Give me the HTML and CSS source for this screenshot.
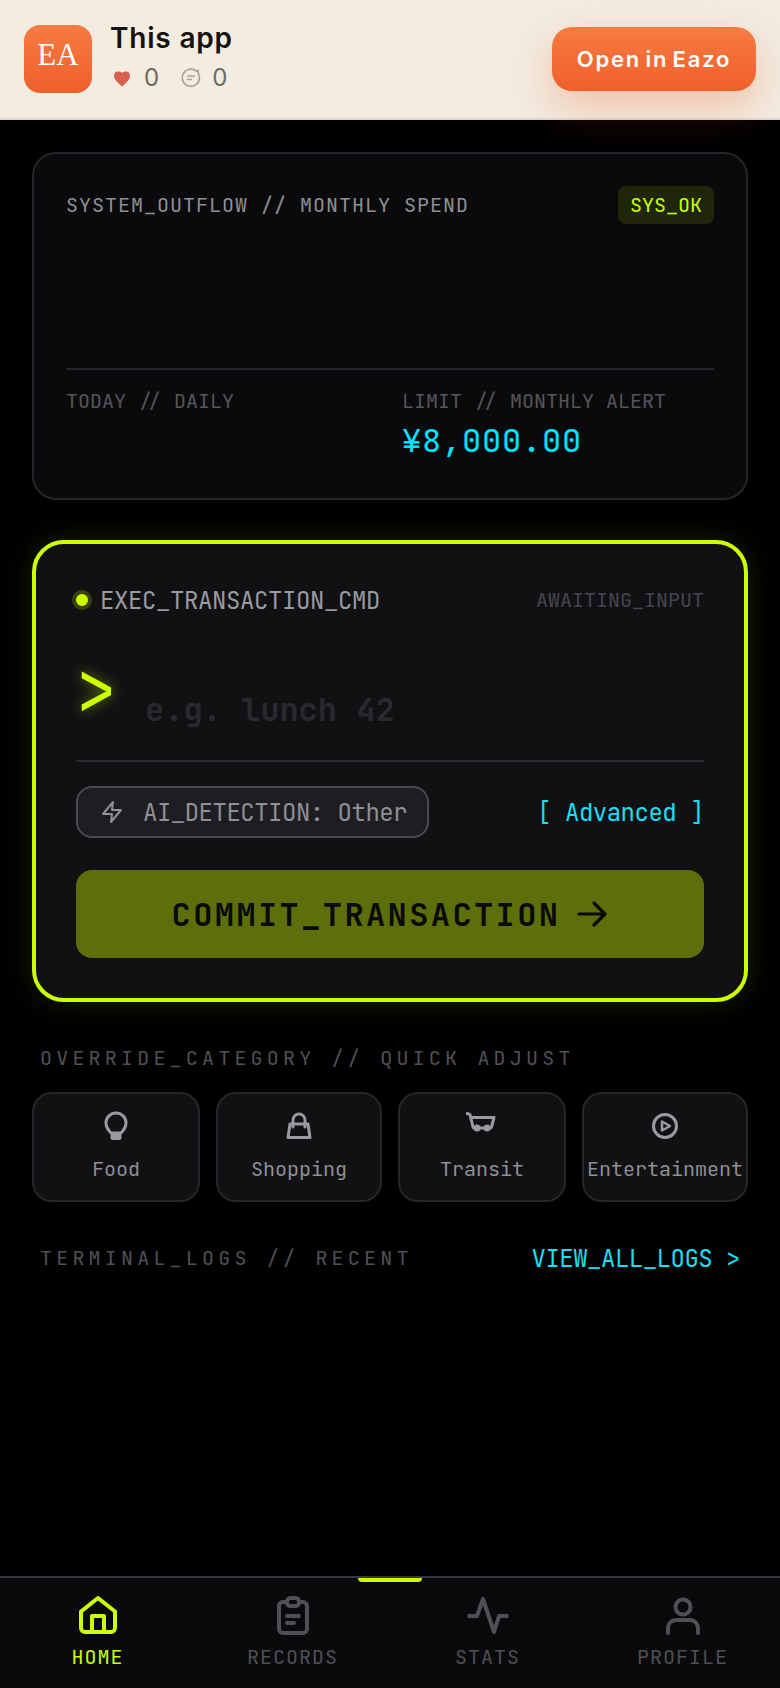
FILE: index.html
```html
<!DOCTYPE html>
<html lang="en">
<head>
<meta charset="utf-8">
<title>This app</title>
<link rel="stylesheet" href="styles.css">
</head>
<body>
<div class="page">
  <header class="topbar">
    <div class="app-icon">EA</div>
    <div class="app-info">
      <div class="app-name">This app</div>
      <div class="app-meta">
        <svg class="meta-icon" viewBox="0 0 20 20"><path class="heart" d="M10 18.500 C5.500 14.500 2 11.500 2 7.500 C2 5 4 3.500 6 3.500 C7.800 3.500 9.200 4 10 5 C10.800 4 12.200 3.500 14 3.500 C16 3.500 18 5 18 7.500 C18 11.500 14.500 14.500 10 18.500 Z"/></svg>
        <span class="meta-num">0</span>
        <svg class="meta-icon chat" viewBox="0 0 20 20"><path class="chat-line" d="M17 2.500 L15.500 3.200 A8.600 8.600 0 1 0 18.500 10 A8.600 8.600 0 0 0 17.300 5.500 Z M6 8 H14 M6 11.500 H11"/></svg>
        <span class="meta-num">0</span>
      </div>
    </div>
    <div class="open-btn">Open in Eazo</div>
  </header>

  <main class="main">
    <section class="card spend">
      <div class="spend-head">
        <span class="eyebrow">SYSTEM_OUTFLOW // MONTHLY SPEND</span>
        <span class="badge">SYS_OK</span>
      </div>
      <div class="spend-amount"></div>
      <div class="spend-stats">
        <div class="stat"><div class="stat-label">TODAY // DAILY</div></div>
        <div class="stat">
          <div class="stat-label">LIMIT // MONTHLY ALERT</div>
          <div class="stat-value">¥8,000.00</div>
        </div>
      </div>
    </section>

    <section class="cmd">
      <div class="cmd-head">
        <span class="cmd-title"><i class="dot"></i>EXEC_TRANSACTION_CMD</span>
        <span class="cmd-status">AWAITING_INPUT</span>
      </div>
      <div class="cmd-input">
        <span class="prompt">&gt;</span>
        <span class="placeholder">e.g. lunch 42</span>
      </div>
      <div class="cmd-tools">
        <span class="pill">
          <svg class="pill-icon" viewBox="0 0 24 24"><path d="M13 2 L3 14 H12 L11 22 L21 10 H12 Z"/></svg>
          AI_DETECTION: Other
        </span>
        <span class="advanced">[ Advanced ]</span>
      </div>
      <div class="commit">
        <span>COMMIT_TRANSACTION</span>
        <svg class="commit-icon" viewBox="0 0 32 32"><path d="M3 16 H29 M18 5 L29 16 L18 27"/></svg>
      </div>
    </section>

    <div class="section-label override">OVERRIDE_CATEGORY // QUICK ADJUST</div>
    <div class="tiles">
      <div class="tile">
        <svg class="tile-icon" viewBox="0 0 32 32"><path d="M11 23 C8 20 6 17.500 6 13 A10 10 0 0 1 26 13 C26 17.500 24 20 21 23 Z"/><rect class="fill" x="10.500" y="23" width="11" height="7" rx="2"/></svg>
        <span class="tile-label">Food</span>
      </div>
      <div class="tile">
        <svg class="tile-icon" viewBox="0 0 32 32"><path d="M7 14 H25 L27 27.500 H5 Z"/><path d="M10 17 V10 A6 6 0 0 1 22 10 V17"/></svg>
        <span class="tile-label">Shopping</span>
      </div>
      <div class="tile">
        <svg class="tile-icon" viewBox="0 0 32 32"><path d="M1 3.500 L4 4.500 L7 17 C7.500 18.500 8 18.500 10 18 H22 C24 18.500 25 18.500 25.500 17 L28 7.500 H5"/><circle class="fill" cx="11" cy="18" r="3.500"/><circle class="fill" cx="21" cy="18" r="3.500"/></svg>
        <span class="tile-label">Transit</span>
      </div>
      <div class="tile">
        <svg class="tile-icon" viewBox="0 0 32 32"><circle cx="16" cy="16" r="11.500"/><path class="thin" d="M13 11.500 L21 16 L13 20.500 Z"/></svg>
        <span class="tile-label">Entertainment</span>
      </div>
    </div>

    <div class="logs-head">
      <span class="section-label">TERMINAL_LOGS // RECENT</span>
      <span class="view-all">VIEW_ALL_LOGS &gt;</span>
    </div>
  </main>

  <nav class="tabbar">
    <i class="indicator"></i>
    <div class="tab active">
      <svg class="tab-icon" viewBox="0 0 48 48"><path d="M24 6 L41 19.500 V36 A4 4 0 0 1 37 40 H11 A4 4 0 0 1 7 36 V19.500 Z"/><path d="M18 40 V24 H30 V40"/></svg>
      <span>HOME</span>
    </div>
    <div class="tab">
      <svg class="tab-icon" viewBox="0 0 48 48"><path d="M18 10 H14 A4 4 0 0 0 10 14 V37 A4 4 0 0 0 14 41 H34 A4 4 0 0 0 38 37 V14 A4 4 0 0 0 34 10 H30"/><rect x="18" y="6" width="12" height="8" rx="3.500"/><path d="M18 24 H30 M18 31 H25"/></svg>
      <span>RECORDS</span>
    </div>
    <div class="tab">
      <svg class="tab-icon" viewBox="0 0 48 48"><path d="M5 24 H13 L19 7 L30 40 L35 24 H43"/></svg>
      <span>STATS</span>
    </div>
    <div class="tab">
      <svg class="tab-icon" viewBox="0 0 48 48"><circle cx="24" cy="15" r="7.500"/><path d="M9 41 V36 A8 8 0 0 1 17 28 H31 A8 8 0 0 1 39 36 V41"/></svg>
      <span>PROFILE</span>
    </div>
  </nav>
</div>
</body>
</html>
```
FILE: styles.css
```css
* { box-sizing: border-box; }
html, body { margin: 0; padding: 0; background: #000; }
body { font-family: "JetBrains Mono", "Noto Sans Mono", "DejaVu Sans Mono", "Liberation Mono", monospace; }
.page { width: 780px; height: 1688px; display: flex; flex-direction: column; overflow: hidden; }

.topbar { height: 120px; flex: none; display: flex; align-items: center; padding: 0 24px; background: #f2ece1; border-bottom: 2px solid #dcd8cf; font-family: Inter, sans-serif; position: relative; z-index: 2; }
.app-icon { width: 68px; height: 68px; border-radius: 16px; background: linear-gradient(180deg, #f67c42, #f05f2a); color: #fff; font-family: "Liberation Serif", serif; font-size: 31px; line-height: 60px; text-align: center; }
.app-info { margin-left: 19px; flex: 1; }
.app-name { font-size: 28px; font-weight: 600; line-height: 34px; color: #14130f; letter-spacing: 0.8px; margin-top: -5px; margin-left: -1px; }
.app-meta { display: flex; align-items: center; height: 30px; margin-top: 8px; margin-left: 1px; }
.meta-icon { width: 20px; height: 20px; margin-right: 12px; }
.meta-icon.chat { margin-left: 22px; margin-right: 11px; }
.heart { fill: #d8614c; }
.chat-line { fill: none; stroke: #a8a296; stroke-width: 1.6; }
.meta-num { font-size: 24px; color: #6f6a60; line-height: 30px; }
.open-btn { width: 204px; height: 64px; margin-top: -1px; border-radius: 20px; background: linear-gradient(180deg, #f67c42, #f05f2a); color: #fff; font-size: 22px; font-weight: 600; letter-spacing: 1.8px; word-spacing: -3px; line-height: 64px; text-align: center; box-shadow: 0 16px 40px rgba(240, 96, 40, 0.3); }

.main { flex: 1; padding: 32px 32px 0; }

.card { border: 2px solid #26262a; border-radius: 24px; background: #0a0a0d; padding: 32px; height: 348px; }
.spend-head { display: flex; justify-content: space-between; align-items: center; height: 38px; }
.eyebrow { font-size: 20px; letter-spacing: 1px; color: #909096; }
.badge { height: 38px; line-height: 38px; padding: 0 12px; border-radius: 8px; background: #20260a; color: #ccff00; font-size: 20px; }
.spend-amount { height: 144px; }
.spend-stats { display: grid; grid-template-columns: 336px 1fr; border-top: 2px solid #26262a; padding-top: 21px; }
.stat-label { font-size: 20px; line-height: 20px; color: #55555a; }
.stat-value { font-size: 32px; line-height: 48px; margin-top: 6px; letter-spacing: 0.8px; color: #00e5ff; }

.cmd { margin-top: 40px; height: 462px; border: 4px solid #ccff00; border-radius: 32px; background: #111114; padding: 40px; box-shadow: 0 0 30px rgba(204, 255, 0, 0.12); }
.cmd-head { display: flex; justify-content: space-between; align-items: center; height: 32px; }
.cmd-title { display: flex; align-items: center; font-size: 24px; letter-spacing: -0.4px; color: #9a9aa0; }
.dot { width: 12px; height: 12px; border-radius: 50%; background: #ccff00; box-shadow: 0 0 0 4px rgba(204, 255, 0, 0.2); margin-right: 12px; }
.cmd-status { font-size: 20px; color: #45454b; }
.cmd-input { display: flex; align-items: flex-start; margin-top: 44px; height: 102px; border-bottom: 2px solid #2a2a2e; }
.prompt { font-size: 68px; font-weight: 400; line-height: 60px; width: 36px; color: #ccff00; text-shadow: 0 0 12px rgba(204, 255, 0, 0.5); transform: scaleY(1.1); }
.placeholder { margin: 26px 0 0 33px; font-size: 32px; font-weight: 700; line-height: 48px; color: #2a2a2e; }
.cmd-tools { display: flex; justify-content: space-between; align-items: center; margin-top: 24px; height: 52px; }
.pill { display: flex; align-items: center; height: 52px; width: 353px; padding-left: 22px; border: 2px solid #4a4a50; border-radius: 16px; background: #1e1e22; font-size: 24px; letter-spacing: -0.5px; color: #8f8f96; }
.pill-icon { width: 24px; height: 24px; margin-right: 19px; fill: none; stroke: #8f8f96; stroke-width: 2; stroke-linejoin: round; }
.advanced { font-size: 24px; letter-spacing: -0.5px; color: #19dff0; }
.commit { display: flex; justify-content: center; align-items: center; margin-top: 32px; height: 88px; border-radius: 16px; background: #5c6f0a; color: #0a0a0d; font-size: 32px; font-weight: 700; letter-spacing: 2.4px; }
.commit-icon { width: 32px; height: 32px; margin-left: 16px; fill: none; stroke: #0a0a0d; stroke-width: 3.200; stroke-linecap: round; stroke-linejoin: round; }

.section-label { font-size: 20px; line-height: 30px; letter-spacing: 4.2px; color: #505056; }
.override { margin: 41px 0 19px; padding-left: 8px; }
.tiles { display: grid; grid-template-columns: 167.5fr 165fr 167.5fr 165fr; gap: 16px; }
.tile { height: 110px; border: 2px solid #26262a; border-radius: 20px; background: #111114; padding-top: 16px; display: flex; flex-direction: column; align-items: center; }
.tile-icon { width: 32px; height: 32px; flex: none; fill: none; stroke: #9a9aa0; stroke-width: 3; stroke-linejoin: round; stroke-linecap: round; }
.tile-icon .fill { fill: #9a9aa0; stroke: none; }
.tile-icon .thin { stroke-width: 2.500; }
.tile-label { margin-top: 12px; font-size: 20px; line-height: 30px; color: #8f8f96; white-space: nowrap; }
.logs-head { display: flex; justify-content: space-between; align-items: center; height: 36px; margin-top: 38px; padding: 0 8px; }
.view-all { font-size: 24px; letter-spacing: -0.5px; color: #19dff0; }

.tabbar { position: relative; flex: none; height: 112px; display: grid; grid-template-columns: repeat(4, 1fr); background: #0a0a0d; border-top: 2px solid #38383c; }
.indicator { position: absolute; left: 358px; top: 0; width: 64px; height: 4px; border-radius: 0 0 4px 4px; background: #ccff00; }
.tab { display: flex; flex-direction: column; align-items: center; padding-top: 14px; color: #4f4f55; font-size: 20px; letter-spacing: 1px; line-height: 30px; }
.tab span { margin-top: 2px; }
.tab.active { color: #ccff00; }
.tab-icon { width: 48px; height: 48px; fill: none; stroke: currentColor; stroke-width: 4; stroke-linejoin: round; stroke-linecap: round; }
```
